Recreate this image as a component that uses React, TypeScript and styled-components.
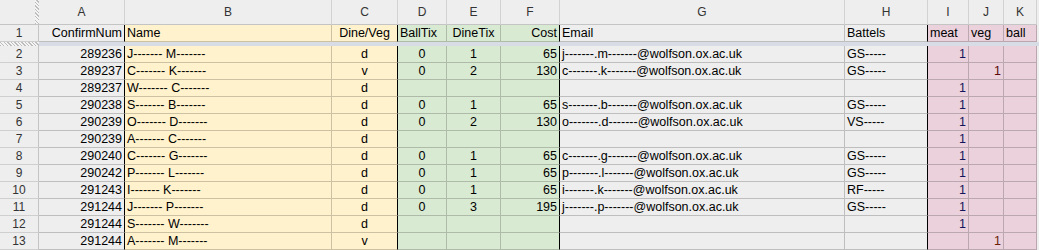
import React from "react";
import styled, { createGlobalStyle } from "styled-components";

const Global = createGlobalStyle`
  html, body { margin: 0; padding: 0; background: #eeeeee; }
  body { font-family: "Liberation Sans", Arial, sans-serif; }
`;

const WIDTHS = [39, 86, 207, 66, 49, 54, 59, 285, 83, 41, 35, 33];
const LETTERS = ["A", "B", "C", "D", "E", "F", "G", "H", "I", "J", "K"];

type Tone = "gray" | "yellow" | "green" | "pink";
const BG: Record<Tone, string> = {
  gray: "#eeeeee",
  yellow: "#fff2cc",
  green: "#d9ead3",
  pink: "#ead1dc",
};
const TONES: Tone[] = ["gray", "yellow", "yellow", "green", "green", "green", "gray", "gray", "pink", "pink", "pink"];
const ALIGN: ("left" | "right" | "center")[] = ["right", "left", "center", "center", "center", "right", "left", "left", "right", "right", "left"];
const THICK = [true, false, true, false, false, true, false, true, false, false, false];

const Sheet = styled.div`
  display: grid;
  grid-template-columns: ${WIDTHS.map((w) => `${w}px`).join(" ")} 1fr;
  width: 1039px;
  height: 250px;
  overflow: hidden;
  background: #eeeeee;
`;

const Corner = styled.div`
  height: 25px;
  box-sizing: border-box;
  border-bottom: 1px solid #c4c4c4;
  background:
    repeating-linear-gradient(45deg, #bdbdbd 0 1px, #f4f4f4 1px 2.5px) right top / 4px 100% no-repeat,
    #eeeeee;
`;

const ColHead = styled.div`
  height: 25px;
  box-sizing: border-box;
  border-bottom: 1px solid #c4c4c4;
  border-right: 1px solid #d2d2d2;
  text-align: center;
  line-height: 24px;
  font-size: 12px;
  color: #333333;
  background: #eeeeee;
`;

const RowHead = styled.div`
  height: 17px;
  box-sizing: border-box;
  border-bottom: 1px solid #cfcfcf;
  border-right: 1px solid #c4c4c4;
  text-align: center;
  line-height: 17px;
  font-size: 12px;
  color: #333333;
  background: #eeeeee;
`;

const HatchBand = styled.div`
  height: 4px;
  background: repeating-linear-gradient(45deg, #bdbdbd 0 1px, #f4f4f4 1px 2.5px);
`;

const Band = styled.div`
  height: 4px;
  background: #d8dce4;
`;

const Cell = styled.div<{ $tone: Tone; $align: string; $thick: boolean; $ink?: string }>`
  height: 17px;
  box-sizing: border-box;
  padding: 1px 2px 0 2px;
  border-bottom: 1px solid rgba(0, 0, 0, 0.2);
  border-right: 1px solid ${(p) => (p.$thick ? "#000000" : "rgba(0, 0, 0, 0.2)")};
  background: ${(p) => BG[p.$tone]};
  text-align: ${(p) => p.$align};
  font-size: 12.5px;
  line-height: 15px;
  color: ${(p) => p.$ink || "#000000"};
  white-space: nowrap;
  overflow: hidden;
`;

const Filler = styled.div`
  background: #eeeeee;
`;

const header = ["ConfirmNum", "Name", "Dine/Veg", "BallTix", "DineTix", "Cost", "Email", "Battels", "meat", "veg", "ball"];
const headerAlign: ("left" | "right" | "center")[] = ["right", "left", "center", "left", "center", "right", "left", "left", "left", "left", "left"];

const em = (a: string, b: string) => `${a}-------.${b}-------@wolfson.ox.ac.uk`;

const rows: string[][] = [
  ["289236", "J------- M-------", "d", "0", "1", "65", em("j", "m"), "GS-----", "1", "", ""],
  ["289237", "C------- K-------", "v", "0", "2", "130", em("c", "k"), "GS-----", "", "1", ""],
  ["289237", "W------- C-------", "d", "", "", "", "", "", "1", "", ""],
  ["290238", "S------- B-------", "d", "0", "1", "65", em("s", "b"), "GS-----", "1", "", ""],
  ["290239", "O------- D-------", "d", "0", "2", "130", em("o", "d"), "VS-----", "1", "", ""],
  ["290239", "A------- C-------", "d", "", "", "", "", "", "1", "", ""],
  ["290240", "C------- G-------", "d", "0", "1", "65", em("c", "g"), "GS-----", "1", "", ""],
  ["290242", "P------- L-------", "d", "0", "1", "65", em("p", "l"), "GS-----", "1", "", ""],
  ["291243", "I------- K-------", "d", "0", "1", "65", em("i", "k"), "RF-----", "1", "", ""],
  ["291244", "J------- P-------", "d", "0", "3", "195", em("j", "p"), "GS-----", "1", "", ""],
  ["291244", "S------- W-------", "d", "", "", "", "", "", "1", "", ""],
  ["291244", "A------- M-------", "v", "", "", "", "", "", "", "1", ""],
];

const inkFor = (col: number, r: number) => {
  if (col === 8) return "#14145a";
  if (col === 9) return r === 11 ? "#6a1e08" : "#5a0a0a";
  return undefined;
};

export default function App() {
  return (
    <>
      <Global />
      <Sheet>
        <Corner />
        {LETTERS.map((l) => (
          <ColHead key={l}>{l}</ColHead>
        ))}
        <Filler />

        <RowHead>1</RowHead>
        {header.map((h, i) => (
          <Cell key={h} $tone={TONES[i]} $align={headerAlign[i]} $thick={THICK[i]}>
            {h}
          </Cell>
        ))}
        <Filler />

        <HatchBand />
        {LETTERS.map((l) => (
          <Band key={"b" + l} />
        ))}
        <Band />

        {rows.map((row, r) => (
          <React.Fragment key={r}>
            <RowHead>{r + 2}</RowHead>
            {row.map((v, c) => (
              <Cell key={c} $tone={TONES[c]} $align={ALIGN[c]} $thick={THICK[c]} $ink={inkFor(c, r)}>
                {v}
              </Cell>
            ))}
            <Filler />
          </React.Fragment>
        ))}
      </Sheet>
    </>
  );
}
